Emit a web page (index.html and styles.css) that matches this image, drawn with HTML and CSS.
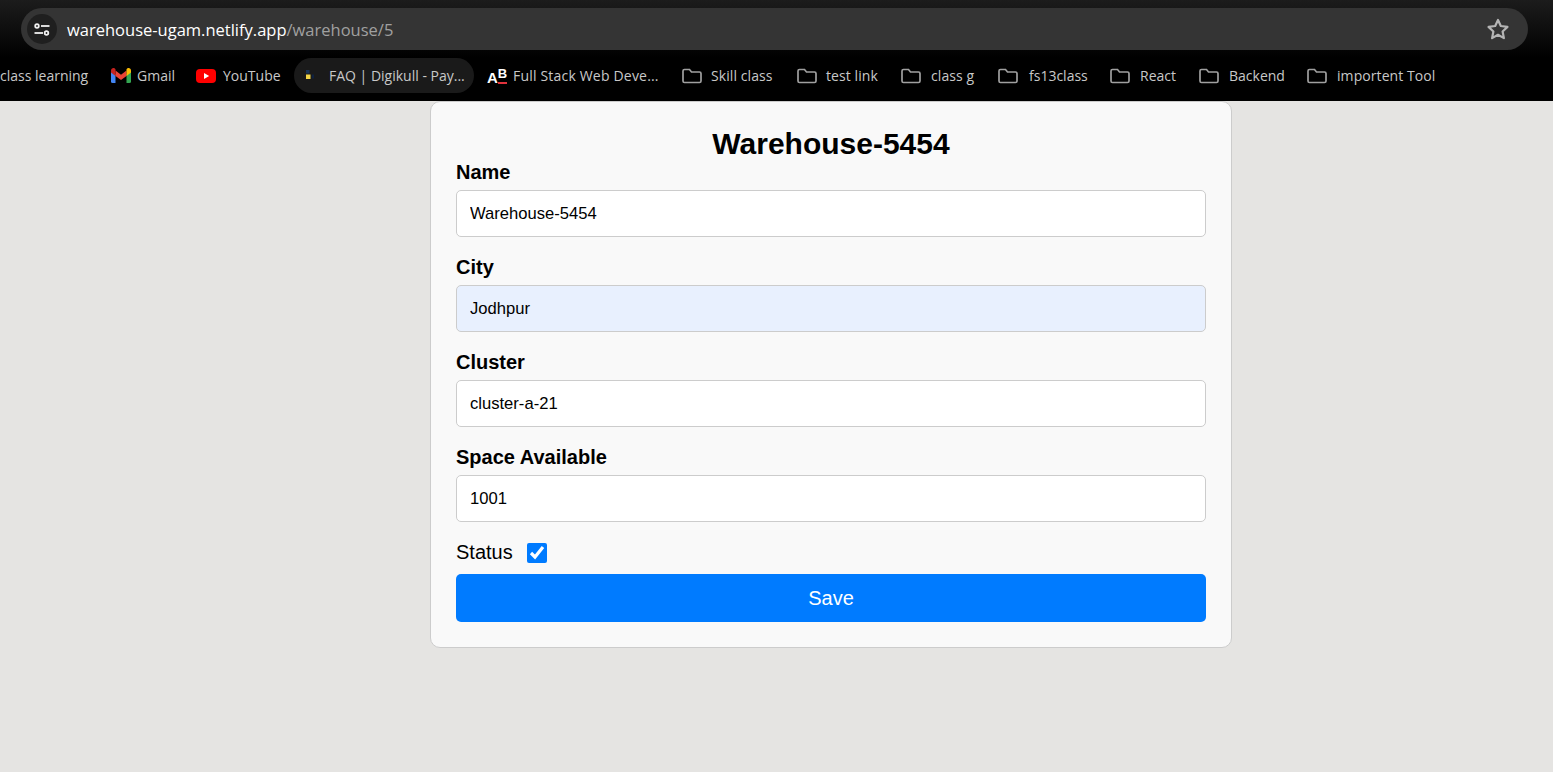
FILE: index.html
```html
<!DOCTYPE html>
<html lang="en">
<head>
<meta charset="utf-8">
<title>Warehouse</title>
<link rel="stylesheet" href="styles.css">
</head>
<body>
<header class="chrome">
  <div class="toolbar">
    <div class="omnibox">
      <span class="site-btn">
        <svg width="16" height="13" viewBox="0 0 16 13" fill="none" stroke="#f0f0f0" stroke-width="1.800"><circle cx="3" cy="3" r="1.800"/><path d="M7 3h8.500"/><path d="M.5 10h8.500"/><circle cx="12.500" cy="10" r="1.800"/></svg>
      </span>
      <span class="url"><span class="host">warehouse-ugam.netlify.app</span><span class="path">/warehouse/5</span></span>
      <svg class="star" width="24" height="24" viewBox="0 0 24 24" fill="none" stroke="#b4b4b4" stroke-width="2.200" stroke-linejoin="round"><path d="M12 3l2.800 6 6.700.9-4.900 4.600 1.300 6.600-5.900-3.300-5.900 3.300 1.300-6.600-4.900-4.600 6.700-.9z"/></svg>
    </div>
  </div>
  <nav class="bookmarks">
    <a class="bm bm-first"><span>class learning</span></a>
    <a class="bm bm-gmail">
      <svg width="20" height="15" viewBox="0 0 20 15"><path fill="#4285f4" d="M0 2v11.500A1.500 1.500 0 0 0 1.500 15H4.500V6.500z"/><path fill="#34a853" d="M20 2v11.500a1.500 1.500 0 0 1-1.500 1.500H15.500V6.500z"/><path fill="#ea4335" d="M4.500 8V2.500L10 6.700l5.500-4.200V8L10 12z"/><path fill="#c5221f" d="M0 2.500C0 .6 2.200-.6 3.800.6L4.500 1.200V8L0 4.500z"/><path fill="#fbbc04" d="M20 2.500c0-1.900-2.200-3.100-3.800-1.900l-.7.600V8L20 4.500z"/></svg>
      <span>Gmail</span>
    </a>
    <a class="bm bm-yt">
      <svg width="20" height="14" viewBox="0 0 20 14"><rect width="20" height="14" rx="4" fill="#f00"/><path d="M8 4l5.200 3L8 10z" fill="#fff"/></svg>
      <span>YouTube</span>
    </a>
    <a class="bm bm-faq">
      <svg width="10" height="11" viewBox="0 0 10 11"><rect x="0" y="0" width="3.500" height="3.500" fill="#16335b"/><rect x="0" y="4.500" width="4.500" height="4.500" fill="#f2d548"/><rect x="6" y="4.500" width="2" height="4" fill="#0e2140"/></svg>
      <span>FAQ | Digikull - Pay...</span>
    </a>
    <a class="bm bm-ab">
      <span class="ab-icon"><span class="ab-a">A</span><span class="ab-b">B</span></span>
      <span class="ab-text">Full Stack Web Deve...</span>
    </a>
    <a class="bm bm-skill"><svg class="folder" width="20" height="16" viewBox="0 0 20 16"><use href="#fold"/></svg><span>Skill class</span></a>
    <a class="bm bm-test"><svg class="folder" width="20" height="16" viewBox="0 0 20 16"><use href="#fold"/></svg><span>test link</span></a>
    <a class="bm bm-classg"><svg class="folder" width="20" height="16" viewBox="0 0 20 16"><use href="#fold"/></svg><span>class g</span></a>
    <a class="bm bm-fs"><svg class="folder" width="20" height="16" viewBox="0 0 20 16"><use href="#fold"/></svg><span>fs13class</span></a>
    <a class="bm bm-react"><svg class="folder" width="20" height="16" viewBox="0 0 20 16"><use href="#fold"/></svg><span>React</span></a>
    <a class="bm bm-back"><svg class="folder" width="20" height="16" viewBox="0 0 20 16"><use href="#fold"/></svg><span>Backend</span></a>
    <a class="bm bm-imp"><svg class="folder" width="20" height="16" viewBox="0 0 20 16"><use href="#fold"/></svg><span>importent Tool</span></a>
  </nav>
  <svg class="defs" width="0" height="0"><defs><path id="fold" d="M2.500 1.500h5l2 2.500h8a1.500 1.500 0 0 1 1.500 1.500v7.500a1.500 1.500 0 0 1-1.500 1.500h-15A1.500 1.500 0 0 1 1 13V3a1.500 1.500 0 0 1 1.500-1.500z" fill="none" stroke="#a0a0a0" stroke-width="1.700"/></defs></svg>
</header>
<main class="page">
  <form class="card">
    <h2 class="title">Warehouse-5454</h2>
    <label class="field-label" for="name">Name</label>
    <input class="field" id="name" type="text" value="Warehouse-5454">
    <label class="field-label" for="city">City</label>
    <input class="field field-autofill" id="city" type="text" value="Jodhpur">
    <label class="field-label" for="cluster">Cluster</label>
    <input class="field" id="cluster" type="text" value="cluster-a-21">
    <label class="field-label" for="space">Space Available</label>
    <input class="field" id="space" type="text" value="1001">
    <div class="status-row">
      <label class="status-label" for="status">Status</label>
      <input class="status-check" id="status" type="checkbox" checked>
    </div>
    <button class="save" type="button">Save</button>
  </form>
</main>
</body>
</html>
```
FILE: styles.css
```css
* { box-sizing: border-box; }
html, body { margin: 0; height: 100%; }
body {
  background: #e5e4e2;
  font-family: "Liberation Sans", Arial, sans-serif;
  overflow: hidden;
}
.chrome {
  background: #000;
  font-family: "Open Sans", "Noto Sans", sans-serif;
}
.defs { display: block; height: 0; }
.toolbar {
  height: 58px;
  padding: 8px 25px 8px 21px;
  background: linear-gradient(#1c1c1c, #000 58px);
}
.omnibox {
  height: 42px;
  background: #343434;
  border-radius: 21px;
  display: flex;
  align-items: center;
  padding: 0 18px 0 6px;
}
.site-btn {
  width: 30px;
  height: 30px;
  border-radius: 50%;
  background: #1f1f1f;
  display: flex;
  align-items: center;
  justify-content: center;
}
.url { margin-left: 10px; font-size: 16.500px; flex: 1; }
.host { color: #fff; }
.path { color: #a0a0a0; }
.bookmarks {
  height: 43px;
  display: flex;
  align-items: flex-start;
  white-space: nowrap;
  color: #c8c8c8;
  font-size: 14px;
}
.bm {
  display: flex;
  align-items: center;
  flex: none;
  height: 35px;
}
.bm-first { width: 111px; }
.bm-gmail { width: 85px; gap: 6px; }
.bm-yt { width: 98px; gap: 7px; }
.bm-faq {
  width: 180px;
  background: #1a1a1a;
  border-radius: 18px;
  padding-left: 12px;
  gap: 13px;
  margin-right: 12px;
}
.bm-ab { width: 196px; gap: 7px; }
.ab-text { letter-spacing: 0.19px; }
.bm-skill { width: 115px; gap: 9px; letter-spacing: 0.08px; }
.bm-test { width: 104px; gap: 9px; letter-spacing: 0.08px; }
.bm-classg { width: 97px; gap: 10px; letter-spacing: 0.08px; }
.bm-fs { width: 112px; gap: 11px; }
.bm-react { width: 89px; gap: 10px; }
.bm-back { width: 108px; gap: 10px; }
.bm-imp { gap: 10px; letter-spacing: 0.08px; }
.ab-icon {
  width: 20px;
  height: 20px;
  display: flex;
  align-items: flex-start;
  font-family: "Liberation Sans", sans-serif;
  font-weight: 700;
  color: #fff;
  line-height: 1;
  letter-spacing: 0;
}
.ab-a { font-size: 15px; margin: 4px 0 0 1px; }
.ab-b {
  font-size: 13px;
  line-height: 10px;
  height: 15px;
  width: 9px;
  margin: 3px 0 0 0;
  border-bottom: 2px solid #e0323c;
}
.page { padding-left: 430px; }
.card {
  width: 802px;
  height: 547px;
  padding: 24px 25px 25px;
  background: #f9f9f9;
  border: 1px solid #ccc;
  border-radius: 10px;
}
.title {
  margin: 0;
  font-size: 30px;
  line-height: 35px;
  text-align: center;
  color: #000;
}
.field-label {
  display: block;
  font-size: 20px;
  font-weight: 700;
  line-height: 23px;
  margin-bottom: 6px;
  color: #000;
}
.field {
  display: block;
  width: 100%;
  height: 47px;
  padding: 0 13px;
  margin-bottom: 19px;
  border: 1px solid #ccc;
  border-radius: 5px;
  background: #fff;
  font: 16.600px "Liberation Sans", Arial, sans-serif;
  color: #000;
}
.field-autofill { background: #e8f0fe; }
.status-row {
  display: flex;
  align-items: center;
  height: 23px;
  margin-bottom: 10px;
}
.status-label { font-size: 20px; color: #000; }
.status-check {
  width: 20px;
  height: 20px;
  margin: 0 0 0 14px;
  accent-color: #007bff;
}
.save {
  display: block;
  width: 100%;
  height: 48px;
  border: 0;
  border-radius: 5px;
  background: #007bff;
  color: #fff;
  font: 20px "Liberation Sans", Arial, sans-serif;
}
```
